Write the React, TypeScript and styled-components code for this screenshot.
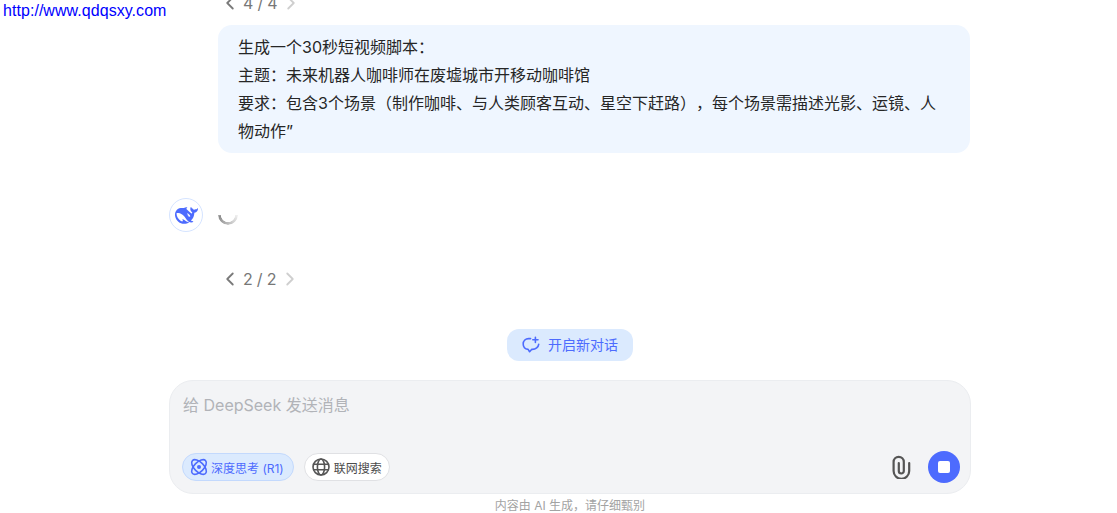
import React from "react"
import styled, { createGlobalStyle } from "styled-components"
import { ChevronLeft, ChevronRight } from "lucide-react"

const GlobalStyle = createGlobalStyle`
  html, body {
    margin: 0;
    padding: 0;
    background: #fff;
    font-family: Inter, "Noto Sans CJK SC", sans-serif;
    text-spacing-trim: space-all;
  }
`

const Page = styled.div`
  position: relative;
  height: 513px;
  overflow: hidden;
  display: flex;
  flex-direction: column;
  justify-content: flex-end;
  padding-left: 169px;
`

const Watermark = styled.a`
  position: absolute;
  left: 3px;
  top: 1px;
  font: 16px/20px "Liberation Sans", Arial, sans-serif;
  letter-spacing: 0.05px;
  color: #0000ff;
  text-decoration: none;
`

const Column = styled.div`
  width: 802px;
  display: flex;
  flex-direction: column;
`

const Pager = styled.div<{ $top?: number }>`
  display: flex;
  align-items: center;
  height: 20px;
  margin-left: 50px;
  margin-top: ${(p) => p.$top ?? 0}px;
  font-size: 16px;
`

const PagerText = styled.span`
  margin: 0 3px 0 2px;
  letter-spacing: -0.2px;
  color: #777;
`

const Bubble = styled.div`
  margin: 12px 1px 0 49px;
  padding: 8px 20px;
  background: #eff6ff;
  border-radius: 14px;
  color: #262626;
  font-size: 16px;
  line-height: 28px;
`

const AnswerRow = styled.div`
  display: flex;
  align-items: flex-start;
  gap: 15px;
  margin-top: 45px;
`

const Avatar = styled.div`
  width: 34px;
  height: 34px;
  box-sizing: border-box;
  border: 1px solid #d5e4ff;
  border-radius: 50%;
  display: flex;
  align-items: center;
  justify-content: center;
  color: #4d6bfe;
`

const Spinner = styled.div`
  width: 20px;
  height: 20px;
  margin-top: 7px;
  border-radius: 50%;
  background: conic-gradient(from 90deg, #f0f0f0 0deg, #8c8c8c 170deg, #a8a8a8 180deg, transparent 181deg);
  mask: radial-gradient(closest-side, transparent 6.8px, #000 7.4px);
`

const NewChatRow = styled.div`
  display: flex;
  justify-content: center;
  margin: 40px 0 19px;
`

const NewChatButton = styled.button`
  width: 126px;
  height: 32px;
  border: 0;
  padding: 0;
  border-radius: 12px;
  background: #dbeafe;
  color: #4d6bfe;
  font: 14px/32px Inter, "Noto Sans CJK SC", sans-serif;
  display: flex;
  align-items: center;
  justify-content: center;
  gap: 8px;
`

const Composer = styled.div`
  box-sizing: border-box;
  height: 114px;
  background: #f3f4f6;
  border: 1px solid #ebedf0;
  border-radius: 24px;
  padding: 12px 10px 10px 13px;
  display: flex;
  flex-direction: column;
  justify-content: space-between;
`

const Placeholder = styled.div`
  font-size: 16px;
  line-height: 24px;
  color: #b1b3b8;
`

const ComposerBar = styled.div`
  display: flex;
  align-items: center;
  justify-content: space-between;
  margin-left: -1px;
`

const Toggles = styled.div`
  display: flex;
  gap: 10px;
`

const Toggle = styled.div<{ $active?: boolean }>`
  box-sizing: border-box;
  height: 28px;
  padding: 0 ${(p) => (p.$active ? 9 : 7)}px 0 7px;
  border-radius: 14px;
  border: 1px solid ${(p) => (p.$active ? "#c3d9fd" : "#e0e1e4")};
  background: ${(p) => (p.$active ? "#dbeafe" : "#fff")};
  color: ${(p) => (p.$active ? "#4d6bfe" : "#4c4c4c")};
  display: flex;
  align-items: center;
  gap: ${(p) => (p.$active ? 3 : 4)}px;
  font-size: 12px;
  white-space: nowrap;
`

const Actions = styled.div`
  display: flex;
  align-items: center;
  gap: 17px;
`

const SendButton = styled.div`
  width: 32px;
  height: 32px;
  border-radius: 50%;
  background: #4d6bfe;
  display: flex;
  align-items: center;
  justify-content: center;
`

const StopSquare = styled.div`
  width: 12px;
  height: 12px;
  border-radius: 2px;
  background: #fff;
`

const Disclaimer = styled.div`
  height: 19px;
  line-height: 24px;
  text-align: center;
  font-size: 12px;
  color: #a3a3a3;
`

const PagerControl = ({ label, top }: { label: string; top?: number }) => (
  <Pager $top={top}>
    <ChevronLeft size={22} color="#7a7a7a" strokeWidth={2} />
    <PagerText>{label}</PagerText>
    <ChevronRight size={22} color="#cfcfcf" strokeWidth={2} />
  </Pager>
)

const WhaleLogo = () => (
  <svg width="23" height="23" viewBox="0 0 24 24" fill="currentColor">
    <path d="M23.748 4.482c-.254-.124-.364.113-.512.234-.051.039-.094.09-.137.136-.372.397-.806.657-1.373.626-.829-.046-1.537.214-2.163.848-.133-.782-.575-1.248-1.247-1.548-.352-.156-.708-.311-.955-.65-.172-.241-.219-.51-.305-.774-.055-.16-.11-.323-.293-.35-.2-.031-.278.136-.356.276-.313.572-.434 1.202-.422 1.84.027 1.436.633 2.58 1.838 3.393.137.093.172.187.129.323-.082.28-.18.552-.266.833-.055.179-.137.217-.329.14a5.526 5.526 0 01-1.736-1.18c-.857-.828-1.631-1.742-2.597-2.458a11.365 11.365 0 00-.689-.471c-.985-.957.13-1.743.388-1.836.27-.098.093-.432-.779-.428-.872.004-1.67.295-2.687.684a3.055 3.055 0 01-.465.137 9.597 9.597 0 00-2.883-.102c-1.885.21-3.39 1.102-4.497 2.623C.082 8.606-.231 10.684.152 12.85c.403 2.284 1.569 4.175 3.36 5.653 1.858 1.533 3.997 2.284 6.438 2.14 1.482-.085 3.133-.284 4.994-1.86.47.234.962.327 1.78.397.63.059 1.236-.03 1.705-.128.735-.156.684-.837.419-.961-2.155-1.004-1.682-.595-2.113-.926 1.096-1.296 2.746-2.642 3.392-7.003.05-.347.007-.565 0-.845-.004-.17.035-.237.23-.256a4.173 4.173 0 001.545-.475c1.396-.763 1.96-2.015 2.093-3.517.02-.23-.004-.467-.247-.588zM11.581 18c-2.089-1.642-3.102-2.183-3.52-2.16-.392.024-.321.471-.235.763.09.288.207.486.371.739.114.167.192.416-.113.603-.673.416-1.842-.14-1.897-.167-1.361-.802-2.5-1.86-3.301-3.307-.774-1.393-1.224-2.887-1.298-4.482-.02-.386.093-.522.477-.592a4.696 4.696 0 011.529-.039c2.132.312 3.946 1.265 5.468 2.774.868.86 1.525 1.887 2.202 2.891.72 1.066 1.494 2.082 2.48 2.914.348.292.625.514.891.677-.802.09-2.14.11-3.054-.614zm1-6.44a.306.306 0 01.415-.287.302.302 0 01.2.288.306.306 0 01-.31.307.303.303 0 01-.305-.308zm3.11 1.596c-.2.081-.399.151-.59.16a1.245 1.245 0 01-.798-.254c-.274-.23-.47-.358-.552-.758a1.73 1.73 0 01.016-.588c.07-.327-.008-.537-.239-.727-.187-.156-.426-.199-.688-.199a.559.559 0 01-.254-.078c-.11-.054-.2-.19-.114-.358.028-.054.16-.186.192-.21.356-.202.767-.136 1.146.016.352.144.618.408 1.001.782.391.451.462.576.685.914.176.265.336.537.445.848.067.195-.019.354-.25.452z" />
  </svg>
)

const NewChatIcon = () => (
  <svg width="18" height="18" viewBox="0 0 18 18" fill="none" stroke="currentColor" strokeWidth="1.6" strokeLinecap="round" strokeLinejoin="round">
    <path d="M8.6 2.6H6.6C3.6 2.6 1.2 4.9 1.2 8c0 2.9 2.1 5.1 4.9 5.4l1.5 2.3 2-2.3h.8c3.3 0 6-2.3 6.3-5" />
    <path d="M13.4 1.2v5.2M10.8 3.8H16" />
  </svg>
)

const AtomIcon = () => (
  <svg width="18" height="18" viewBox="0 0 18 18" fill="none" stroke="currentColor" strokeWidth="1.6">
    <ellipse cx="9" cy="9" rx="9.2" ry="4.8" transform="rotate(45 9 9)" />
    <ellipse cx="9" cy="9" rx="9.2" ry="4.8" transform="rotate(-45 9 9)" />
    <circle cx="9" cy="9" r="2" fill="currentColor" stroke="none" />
  </svg>
)

const GlobeIcon = () => (
  <svg width="18" height="18" viewBox="0 0 18 18" fill="none" stroke="#555" strokeWidth="1.6">
    <circle cx="9" cy="9" r="8" />
    <ellipse cx="9" cy="9" rx="3.6" ry="8" />
    <path d="M1.6 6.2h14.8M1.6 11.8h14.8" />
  </svg>
)

const ClipIcon = () => (
  <svg width="19" height="24" viewBox="0 0 19 24" fill="none" stroke="#555" strokeWidth="2.2" strokeLinecap="round">
    <path d="M17.2 8v8a7.8 7.8 0 0 1-15.6 0V7a5 5 0 0 1 10.2 0v9a2.5 2.5 0 0 1-5 0V8" />
  </svg>
)

export default function App() {
  return (
    <Page>
      <GlobalStyle />
      <Watermark>http://www.qdqsxy.com</Watermark>
      <Column>
        <PagerControl label="4 / 4" />
        <Bubble>
          生成一个30秒短视频脚本：
          <br />
          主题：未来机器人咖啡师在废墟城市开移动咖啡馆
          <br />
          要求：包含3个场景（制作咖啡、与人类顾客互动、星空下赶路），每个场景需描述光影、运镜、人物动作”
        </Bubble>
        <AnswerRow>
          <Avatar>
            <WhaleLogo />
          </Avatar>
          <Spinner />
        </AnswerRow>
        <PagerControl label="2 / 2" top={37} />
        <NewChatRow>
          <NewChatButton>
            <NewChatIcon />
            开启新对话
          </NewChatButton>
        </NewChatRow>
        <Composer>
          <Placeholder>给 DeepSeek 发送消息</Placeholder>
          <ComposerBar>
            <Toggles>
              <Toggle $active>
                <AtomIcon />
                深度思考 (R1)
              </Toggle>
              <Toggle>
                <GlobeIcon />
                联网搜索
              </Toggle>
            </Toggles>
            <Actions>
              <ClipIcon />
              <SendButton>
                <StopSquare />
              </SendButton>
            </Actions>
          </ComposerBar>
        </Composer>
        <Disclaimer>内容由 AI 生成，请仔细甄别</Disclaimer>
      </Column>
    </Page>
  )
}
